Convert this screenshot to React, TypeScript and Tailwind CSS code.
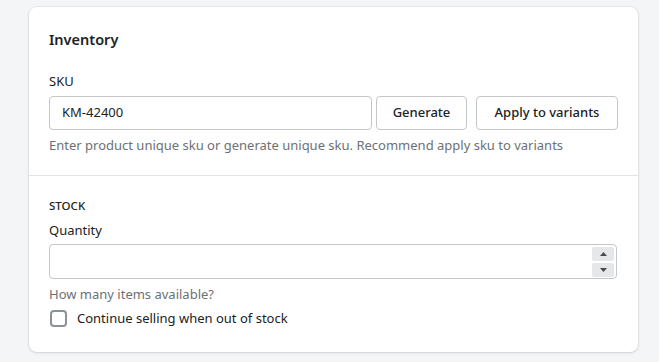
import React from "react";

export default function App() {
  return (
    <div
      className="min-h-[362px] w-full bg-[#f4f5f7] pt-[7px] pl-[29px]"
      style={{ fontFamily: '"Noto Sans", "Open Sans", sans-serif' }}
    >
      <div className="w-[609px] h-[345px] rounded-lg bg-white shadow-[0_0_0_1px_rgba(63,63,68,0.05),0_1px_3px_0_rgba(63,63,68,0.15)] flex flex-col">
        <div className="px-5 pt-5 pb-5 border-b border-[#e1e3e5]">
          <h2 className="text-[14.5px] leading-6 font-semibold text-[#202223]">Inventory</h2>
          <div className="mt-5 text-[13px] leading-5 text-[#202223]">SKU</div>
          <div className="mt-[5px] flex items-stretch">
            <div className="w-[323px] h-[34px] rounded-[4px] border border-[#c4c7ca] flex items-center px-[12px] text-[13px] text-[#202223]">
              KM-42400
            </div>
            <button className="ml-1 w-[91px] h-[34px] rounded-[4px] border border-[#c4c7ca] bg-white text-[13px] font-medium text-[#202223]">
              Generate
            </button>
            <button className="ml-[9px] w-[142px] h-[34px] rounded-[4px] border border-[#c4c7ca] bg-white text-[13px] font-medium text-[#202223]">
              Apply to variants
            </button>
          </div>
          <div className="mt-[5px] text-[13px] leading-5 text-[#6d7175]">
            Enter product unique sku or generate unique sku. Recommend apply sku to variants
          </div>
        </div>
        <div className="px-5 pt-[22px]">
          <div className="text-[11.5px] leading-4 font-medium text-[#202223]">STOCK</div>
          <div className="mt-[6px] text-[13px] leading-5 text-[#202223]">Quantity</div>
          <div className="mt-1 w-[568px] h-[35px] rounded-[4px] border border-[#c4c7ca] flex items-center justify-end pr-[2px]">
            <div className="flex flex-col gap-[2px]">
              <div className="w-[22px] h-[14px] rounded-[2px] bg-[#e6e7e9] flex items-center justify-center">
                <svg width="7" height="4" viewBox="0 0 7 4"><path d="M0 4 L3.5 0 L7 4 Z" fill="#4a4d50" /></svg>
              </div>
              <div className="w-[22px] h-[14px] rounded-[2px] bg-[#e6e7e9] flex items-center justify-center">
                <svg width="7" height="4" viewBox="0 0 7 4"><path d="M0 0 L3.5 4 L7 0 Z" fill="#4a4d50" /></svg>
              </div>
            </div>
          </div>
          <div className="mt-[5px] text-[13px] leading-5 text-[#6d7175]">How many items available?</div>
          <label className="mt-1 flex items-center gap-[10px] text-[13px] leading-5 text-[#202223]">
            <span className="ml-px w-[17px] h-[17px] rounded-[4px] border-2 border-[#8c9196] bg-white" />
            Continue selling when out of stock
          </label>
        </div>
      </div>
    </div>
  );
}
